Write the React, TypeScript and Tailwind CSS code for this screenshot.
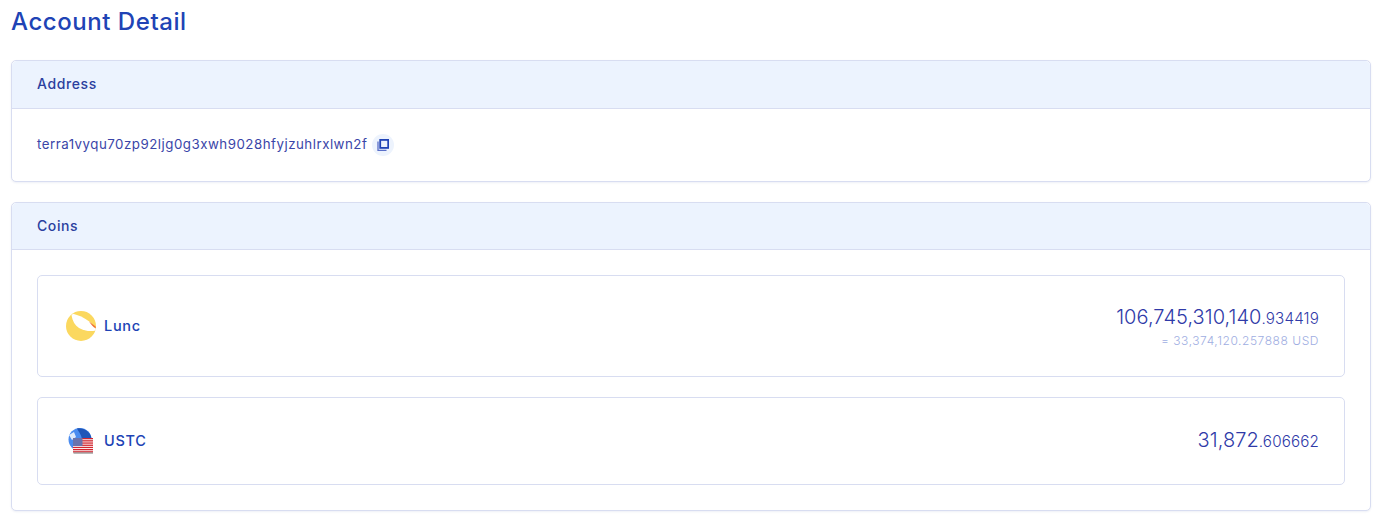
const font = { fontFamily: 'Inter, "Liberation Sans", sans-serif' };

function CopyIcon() {
  return (
    <span className="ml-[5px] flex h-[22px] w-[22px] items-center justify-center rounded-full bg-[#edf3fd]">
      <svg width="12" height="12" viewBox="0 0 12 12" fill="none">
        <path d="M1 2.5v9h8.5" stroke="#5a6fc8" strokeWidth="1.3" />
        <rect x="3.2" y="0.9" width="8" height="8" stroke="#2043b5" strokeWidth="1.8" />
      </svg>
    </span>
  );
}

function LuncIcon() {
  return (
    <svg width="30" height="30" viewBox="0 0 30 30">
      <circle cx="15" cy="15" r="15" fill="#fbd85f" />
      <path d="M5.5 4.2 C6.5 10 9 14.5 13 17 C18 20 25 20.8 29.6 19.5 L29.8 17 L24 11 C18 6.5 12 4 7 2.8 Z" fill="#ffffff" />
      <path d="M23 10.5 L29.6 15.5 L29.9 17.6 C27 16 25 13 23 10.5 Z" fill="#f0702f" />
    </svg>
  );
}

function UstcIcon() {
  const stripes = [0, 1, 2, 3, 4, 5, 6];
  return (
    <svg width="26" height="26" viewBox="0 0 26 26">
      <circle cx="12" cy="11.5" r="11.5" fill="#4a8cf0" />
      <path d="M9 0.5 C16 -0.5 23 4 23.5 11 L14 11 C13 6 10 3 9 0.5 Z" fill="#1f56b8" />
      <path d="M1 7 L6 4 L8 9 L4 12 Z" fill="#dfeafb" />
      <rect x="5" y="10" width="20" height="14.5" fill="#ffffff" />
      {stripes.map((i) => (
        <rect key={i} x="5" y={10 + i * 2.2} width="20" height="1.3" fill="#d22630" />
      ))}
      <rect x="5" y="10" width="9.5" height="8" fill="#6a73ad" />
      <rect x="5.5" y="24.4" width="19.5" height="1.2" fill="#8c8c8c" />
    </svg>
  );
}

function Card({ title, children, head }: { title: string; children: React.ReactNode; head: string }) {
  return (
    <section className="rounded-[5px] border border-[#d8ddf1] bg-white shadow-[0_1px_2px_rgba(40,60,140,0.08)]">
      <div className={`flex items-center rounded-t-[5px] border-b border-[#d8ddf1] bg-[#ecf3fe] px-[25px] pb-[2px] text-[14px] font-medium tracking-[0.6px] text-[#2b3f9e] ${head}`}>
        {title}
      </div>
      {children}
    </section>
  );
}

function Coin({ name, icon, whole, frac, usd, h }: { name: string; icon: React.ReactNode; whole: string; frac: string; usd?: string; h: string }) {
  return (
    <div className={`flex items-center justify-between rounded-[5px] border border-[#d8ddf1] pl-[28px] pr-[25px] ${h}`}>
      <div className="flex items-center gap-[8px] pb-[1px]">
        <span className="flex w-[30px] justify-center">{icon}</span>
        <span className="text-[14.5px] font-medium tracking-[0.7px] text-[#2043b5]">{name}</span>
      </div>
      <div className="text-right">
        <div className="text-[20px] leading-[24px] font-light tracking-[0.05px] text-[#2f3aa8]">
          {whole}
          <span className="text-[15.2px] font-light tracking-[0.15px] text-[#2f3aa8]">{frac}</span>
        </div>
        {usd && <div className="mt-[3px] text-[12px] leading-[14px] font-light tracking-[0.55px] text-[#a0aee2]">{usd}</div>}
      </div>
    </div>
  );
}

export default function App() {
  return (
    <div className="h-[519px] overflow-hidden bg-white pr-[13px] pl-[11px]" style={font}>
      <h1 className="h-[60px] pt-[7px] text-[24px] leading-[30px] font-medium tracking-[0.55px] text-[#2043b5]">Account Detail</h1>
      <Card title="Address" head="h-[48px]">
        <div className="flex h-[72px] items-center px-[25px] text-[13.3px] tracking-[0.5px] text-[#3a45a8]">
          terra1vyqu70zp92ljg0g3xwh9028hfyjzuhlrxlwn2f
          <CopyIcon />
        </div>
      </Card>
      <div className="h-[20px]" />
      <Card title="Coins" head="h-[47px]">
        <div className="flex flex-col gap-[20px] px-[25px] pt-[25px] pb-[25px]">
          <Coin name="Lunc" icon={<LuncIcon />} whole="106,745,310,140" frac=".934419" usd="= 33,374,120.257888 USD" h="h-[102px]" />
          <Coin name="USTC" icon={<UstcIcon />} whole="31,872" frac=".606662" h="h-[88px]" />
        </div>
      </Card>
    </div>
  );
}
